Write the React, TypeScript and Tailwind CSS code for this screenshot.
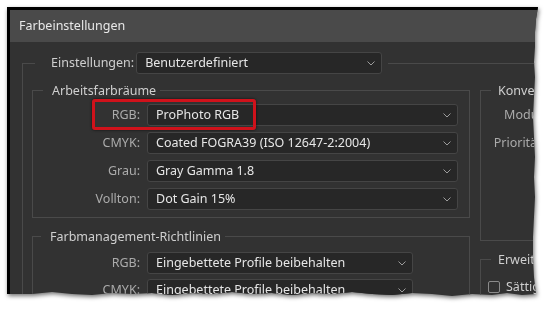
import React from "react";

const legendText = "leading-[17px] text-[#cfcfcf]";
const labelClass = "shrink-0 text-right text-[#ababab]";

const Chevron = () => (
    <svg width="8" height="5" viewBox="0 0 8 5" className="shrink-0">
        <polyline points="0.5,0.5 4,4 7.5,0.5" fill="none" stroke="#9c9c9c" strokeWidth="1" />
    </svg>
);

const Select = ({ text, className }: { text: string, className: string }) => (
    <div className={`flex h-[22px] shrink-0 items-center justify-between rounded-[3px] border border-[#454545] bg-[#272727] pl-[8px] pr-[6px] text-[#e6e6e6] ${className}`}>
        <span className="whitespace-nowrap">{text}</span>
        <Chevron />
    </div>
);

const Row = ({ label, value, labelW, selectW, highlight }: { label: string, value: string, labelW: string, selectW: string, highlight?: boolean }) => (
    <div className="relative flex items-center gap-[7px]">
        <span className={`${labelClass} ${labelW}`}>{label}</span>
        <Select text={value} className={selectW} />
        {highlight &&
            <div className="absolute left-[59px] top-[-5px] h-[31px] w-[164px] rounded-[3px] border-[3px] border-[#d0121b] shadow-[0_0_3px_rgba(0,0,0,0.7)]" />
        }
    </div>
);

const torn = "[clip-path:polygon(0_0,531px_0,529px_12px,528px_25px,528px_40px,527px_55px,528px_70px,527px_90px,526px_110px,527px_130px,528px_150px,527px_170px,528px_190px,527px_210px,526px_230px,526px_250px,527px_270px,529px_287px,515px_288px,500px_286px,485px_288px,465px_287px,445px_289px,425px_287px,405px_286px,385px_288px,365px_287px,345px_285px,325px_287px,305px_286px,285px_288px,265px_286px,245px_287px,225px_285px,205px_287px,185px_286px,165px_288px,145px_286px,125px_287px,105px_286px,85px_288px,65px_287px,45px_285px,25px_287px,0_287px)]";

export default function App() {
    return (
        <div className="h-[310px] w-[549px] overflow-hidden bg-white pl-[7px] pt-[7px] font-['Noto_Sans',sans-serif] text-[12.5px]">
            <div className="h-[289px] w-[531px] [filter:drop-shadow(1px_2px_2px_rgba(0,0,0,0.55))]">
                <div className={`flex h-full w-full flex-col overflow-hidden border-l-[3px] border-t-[3px] border-black bg-[#323232] ${torn}`}>
                    <div className="flex h-[32px] shrink-0 items-center bg-[#4a4a4a] pl-[9px] text-[12.5px] text-[#e8e8e8]">
                        Farbeinstellungen
                    </div>
                    <div className="flex-1 pl-[12px] pt-[10px]">
                        <fieldset className="border-l border-t border-[#4a4a4a]">
                            <legend className="ml-[12px] pl-[16px] pr-[6px]">
                                <div className="flex items-center gap-[2px]">
                                    <span className="text-[#cfcfcf]">Einstellungen:</span>
                                    <Select text="Benutzerdefiniert" className="w-[246px]" />
                                </div>
                            </legend>
                            <div className="flex gap-[10px] pl-[9px] pt-[8px]">
                                {/* linke Spalte */}
                                <div className="flex w-[438px] shrink-0 flex-col gap-[10px]">
                                    <fieldset className="border border-[#4a4a4a]">
                                        <legend className={`ml-[10px] pl-[9px] pr-[4px] ${legendText}`}>Arbeitsfarbräume</legend>
                                        <div className="flex flex-col gap-[6px] pb-[7px] pr-[10px] pt-[5px]">
                                            <Row label="RGB:" value="ProPhoto RGB" labelW="w-[107px]" selectW="w-[311px]" highlight />
                                            <Row label="CMYK:" value="Coated FOGRA39 (ISO 12647-2:2004)" labelW="w-[107px]" selectW="w-[311px]" />
                                            <Row label="Grau:" value="Gray Gamma 1.8" labelW="w-[107px]" selectW="w-[311px]" />
                                            <Row label="Vollton:" value="Dot Gain 15%" labelW="w-[107px]" selectW="w-[311px]" />
                                        </div>
                                    </fieldset>
                                    <fieldset className="border border-[#4a4a4a]">
                                        <legend className={`ml-[8px] pl-[9px] pr-[4px] ${legendText}`}>Farbmanagement-Richtlinien</legend>
                                        <div className="flex flex-col gap-[5px] pb-[7px] pt-[7px]">
                                            <Row label="RGB:" value="Eingebettete Profile beibehalten" labelW="w-[107px]" selectW="w-[266px]" />
                                            <Row label="CMYK:" value="Eingebettete Profile beibehalten" labelW="w-[107px]" selectW="w-[266px]" />
                                            <Row label="Grau:" value="Eingebettete Profile beibehalten" labelW="w-[107px]" selectW="w-[266px]" />
                                        </div>
                                    </fieldset>
                                </div>
                                {/* rechte Spalte */}
                                <div className="flex w-[300px] shrink-0 flex-col gap-[10px]">
                                    <fieldset className="h-[159px] border border-[#4a4a4a]">
                                        <legend className={`ml-[10px] pl-[7px] pr-[4px] ${legendText}`}>Konvertierungsoptionen</legend>
                                        <div className="flex flex-col gap-[6px] pt-[5px]">
                                            <Row label="Modul:" value="Adobe (ACE)" labelW="w-[64px]" selectW="w-[180px]" />
                                            <Row label="Priorität:" value="Relativ farbmetrisch" labelW="w-[64px]" selectW="w-[180px]" />
                                        </div>
                                    </fieldset>
                                    <fieldset className="border border-[#4a4a4a]">
                                        <legend className={`ml-[10px] pl-[7px] pr-[4px] ${legendText}`}>Erweiterte Steuerungen</legend>
                                        <div className="flex items-center gap-[6px] pl-[7px] pt-[10px] pb-[8px]">
                                            <div className="h-[12px] w-[12px] shrink-0 rounded-[2px] border border-[#8a8a8a]" />
                                            <span className="whitespace-nowrap text-[#cfcfcf]">Sättigung von Monitorfarben verringern um:</span>
                                        </div>
                                    </fieldset>
                                </div>
                            </div>
                        </fieldset>
                    </div>
                </div>
            </div>
        </div>
    );
}
